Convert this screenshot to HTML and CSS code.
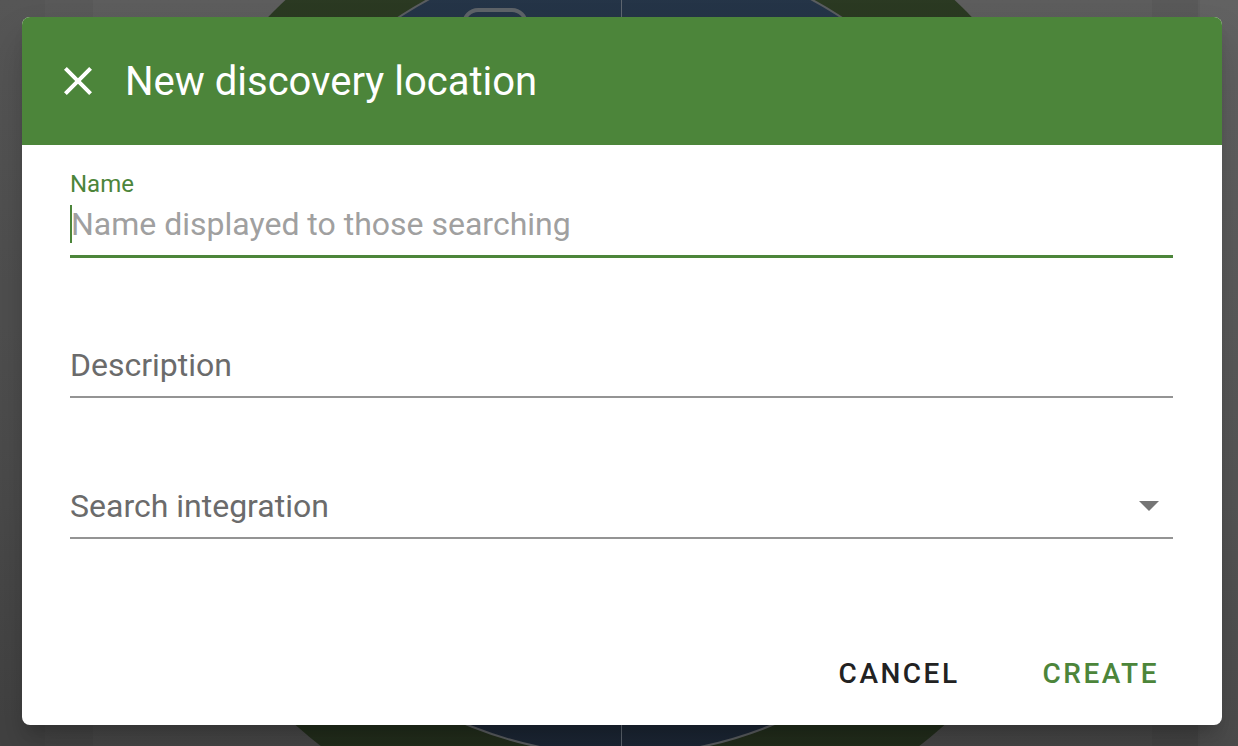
FILE: index.html
```html
<!DOCTYPE html>
<html lang="en">
<head>
    <meta charset="UTF-8">
    <meta name="viewport" content="width=device-width, initial-scale=1.0">
    <title>New discovery location</title>
    <link rel="stylesheet" href="styles.css">
</head>
<body>

<div class="backdrop">
    <div class="column-line line-1"></div>
    <div class="column-line line-2"></div>
    <div class="column-line line-3"></div>
    <div class="column-line line-4"></div>
    <div class="globe">
        <div class="globe-inner"></div>
        <div class="globe-axis"></div>
        <div class="globe-badge"></div>
    </div>
</div>

<div class="dialog">
    <header class="dialog-header">
        <button class="icon-btn" aria-label="Close">
            <svg viewBox="0 0 24 24" width="48" height="48">
                <path d="M19 6.41L17.59 5 12 10.59 6.41 5 5 6.41 10.59 12 5 17.59 6.41 19 12 13.41 17.59 19 19 17.59 13.41 12z" fill="#ffffff"/>
            </svg>
        </button>
        <h1 class="dialog-title">New discovery location</h1>
    </header>

    <div class="dialog-body">
        <div class="field focused">
            <div class="field-label">Name</div>
            <div class="field-input">
                <span class="caret"></span><span class="placeholder">Name displayed to those searching</span>
            </div>
        </div>

        <div class="field">
            <div class="field-label"></div>
            <div class="field-input">
                <span class="empty-label">Description</span>
            </div>
        </div>

        <div class="field">
            <div class="field-label"></div>
            <div class="field-input select">
                <span class="empty-label">Search integration</span>
                <svg class="drop-arrow" viewBox="0 0 24 24" width="48" height="48">
                    <path d="M7 10l5 5 5-5z" fill="#757575"/>
                </svg>
            </div>
        </div>

        <div class="dialog-actions">
            <button class="btn btn-cancel">Cancel</button>
            <button class="btn btn-create">Create</button>
        </div>
    </div>
</div>

</body>
</html>
```

FILE: styles.css
```css
body {
    margin: 0;
    height: 746px;
    overflow: hidden;
    font-family: Roboto, "Liberation Sans", sans-serif;
    background: linear-gradient(180deg, #5d5d5d 0%, #525252 60%, #474747 100%);
    padding: 17px 16px 21px 22px;
    box-sizing: border-box;
}

/* blurred page behind the dialog */
.backdrop {
    position: absolute;
    top: 0;
    left: 0;
    width: 1238px;
    height: 746px;
    overflow: hidden;
}

.column-line {
    position: absolute;
    top: 0;
    bottom: 0;
    width: 48px;
    background: rgba(0, 0, 0, 0.04);
}

.line-1 { left: 0; width: 45px; background: rgba(0, 0, 0, 0.07); }
.line-2 { left: 45px; }
.line-3 { left: 1152px; }
.line-4 { left: 1198px; width: 40px; background: rgba(255, 255, 255, 0.03); }

.globe {
    position: absolute;
    left: 130px;
    top: -132px;
    width: 980px;
    height: 980px;
    border-radius: 50%;
    background: linear-gradient(180deg, #2c3b23 0%, #27341f 60%, #212b1b 100%);
}

.globe-inner {
    position: absolute;
    left: 87px;
    top: 82px;
    width: 806px;
    height: 806px;
    border-radius: 50%;
    box-sizing: border-box;
    border: 2px solid #5a5d60;
    background: linear-gradient(180deg, #253548 0%, #222f40 60%, #1c2634 100%);
}

.globe-axis {
    position: absolute;
    left: 491px;
    top: 0;
    width: 1px;
    height: 980px;
    background: #5e6670;
}

.globe-badge {
    position: absolute;
    left: 332px;
    top: 140px;
    width: 58px;
    height: 40px;
    border: 4px solid #5e6368;
    border-radius: 16px;
}

.dialog {
    position: relative;
    width: 1200px;
    height: 708px;
    background: #ffffff;
    border-radius: 8px;
    overflow: hidden;
    display: flex;
    flex-direction: column;
    box-shadow: 0 11px 15px -7px rgba(0, 0, 0, 0.2), 0 24px 38px 3px rgba(0, 0, 0, 0.14);
}

.dialog-header {
    height: 128px;
    background-color: #4c853a;
    display: flex;
    align-items: center;
    padding-left: 32px;
    flex-shrink: 0;
}

.icon-btn {
    width: 48px;
    height: 48px;
    padding: 0;
    border: none;
    background: none;
    display: flex;
}

.dialog-title {
    margin: 0 0 0 23px;
    font-size: 40px;
    font-weight: 400;
    color: #ffffff;
}

.dialog-body {
    flex: 1;
    display: flex;
    flex-direction: column;
    padding: 26px 49px 25px 48px;
}

.field {
    border-bottom: 2px solid #949494;
    padding-bottom: 9px;
    margin-bottom: 55px;
}

.field.focused {
    border-bottom-color: #4c853a;
    box-shadow: 0 1px 0 #4c853a;
}

.field-label {
    height: 26px;
    font-size: 24px;
    line-height: 26px;
    color: #4c853a;
}

.field-input {
    margin-top: 5px;
    height: 44px;
    font-size: 32px;
    line-height: 44px;
    display: flex;
    align-items: center;
}

.caret {
    width: 2px;
    height: 38px;
    background: #4c853a;
    margin-right: -1px;
}

.placeholder {
    color: #a0a0a0;
}

.empty-label {
    color: #6b6b6b;
}

.select {
    justify-content: space-between;
}

.drop-arrow {
    margin-top: -3px;
}

.dialog-actions {
    margin-top: auto;
    display: flex;
    justify-content: flex-end;
}

.btn {
    font-family: Roboto, "Liberation Sans", sans-serif;
    font-size: 28px;
    font-weight: 500;
    line-height: 36px;
    letter-spacing: 2.5px;
    text-transform: uppercase;
    border: none;
    background: none;
    padding: 8px 14px 8px 16px;
}

.btn-cancel {
    color: #222222;
}

.btn-create {
    color: #4c853a;
    margin-left: 53px;
}
```
